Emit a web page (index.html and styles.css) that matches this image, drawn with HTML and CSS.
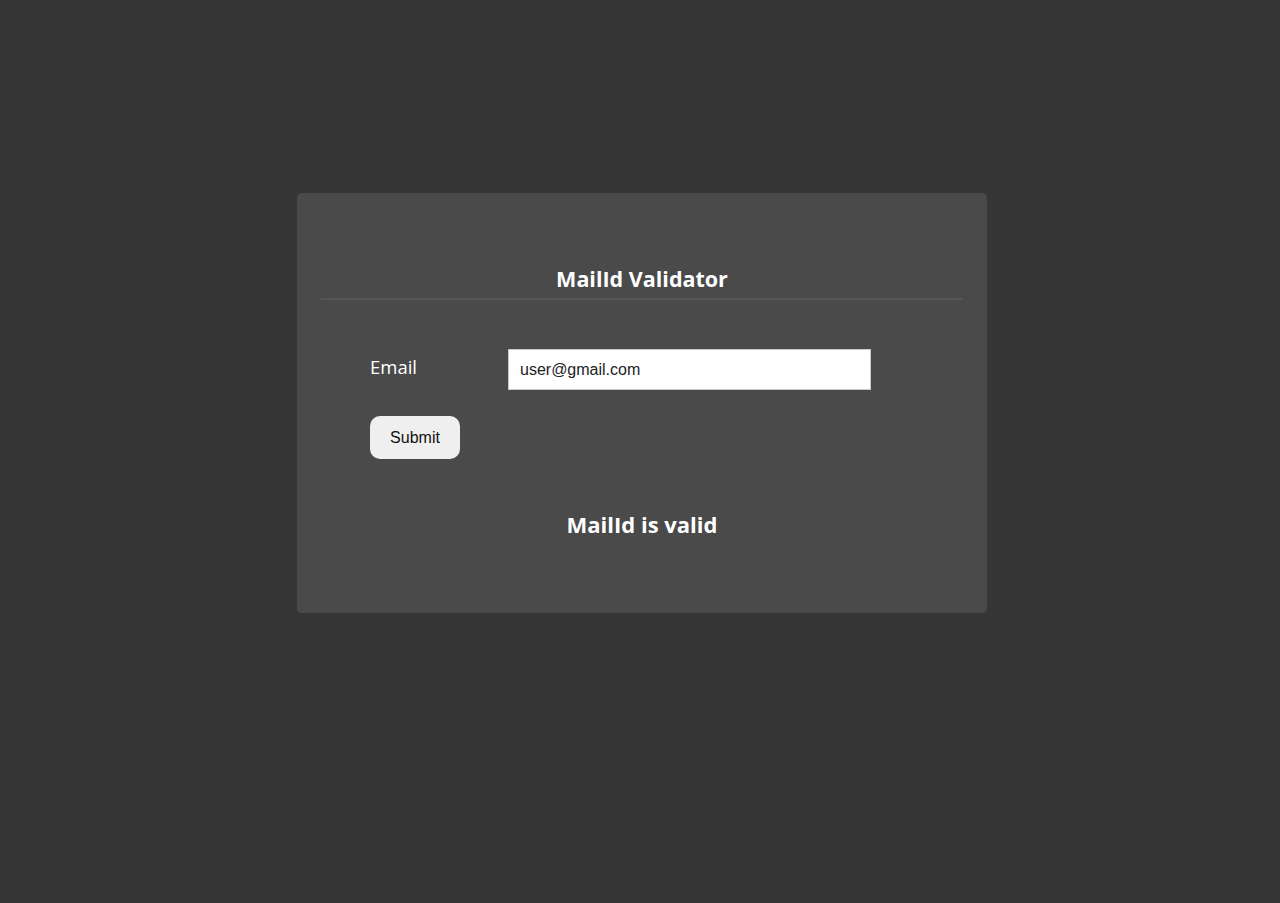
FILE: index.html
```html
<!DOCTYPE html>
<html>
<head>
<meta charset="utf-8">
<link rel="stylesheet" href="styles.css">
</head>
<body>
<div class="card">
  <h2 class="title">MailId Validator</h2>
  <div class="form">
    <div class="row">
      <label class="label">Email</label>
      <input class="input" type="text" value="user@gmail.com">
    </div>
    <button class="btn">Submit</button>
  </div>
  <h2 class="result">MailId is valid</h2>
</div>
</body>
</html>
```
FILE: styles.css
```css
html, body {
  margin: 0;
  padding: 0;
  background: #363636;
  height: 100%;
}
body {
  font-family: "Open Sans", "DejaVu Sans", sans-serif;
  color: #fff;
  display: flex;
  justify-content: center;
  padding-top: 193px;
  box-sizing: border-box;
}
.card {
  width: 690px;
  height: 420px;
  box-sizing: border-box;
  background: #4a4a4a;
  border-radius: 5px;
  padding: 66px 24px 0;
  margin-left: 4px;
}
.title {
  margin: 0;
  font-size: 21.5px;
  font-weight: 700;
  text-align: center;
  line-height: 39px;
  border-bottom: 2px solid #565656;
  padding-bottom: 0;
}
.form {
  padding: 49px 0 0 49px;
}
.row {
  display: flex;
  align-items: center;
}
.label {
  width: 138px;
  font-size: 18.5px;
  padding-bottom: 6px;
}
.input {
  width: 363px;
  height: 41px;
  box-sizing: border-box;
  border: 1px solid #c8c8c8;
  background: #fff;
  padding: 0 11px;
  font-family: "Liberation Sans", Arial, sans-serif;
  font-size: 16px;
  color: #222;
  outline: none;
}
.btn {
  margin-top: 26px;
  width: 90px;
  height: 43px;
  border: none;
  border-radius: 10px;
  background: #efefef;
  font-family: "Liberation Sans", Arial, sans-serif;
  font-size: 16px;
  color: #111;
}
.result {
  margin: 50px 0 0;
  font-size: 22px;
  font-weight: 700;
  text-align: center;
}
```
